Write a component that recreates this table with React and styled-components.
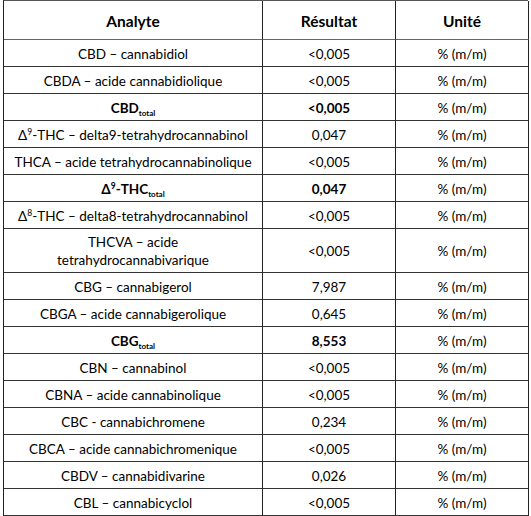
import React from "react";
import styled, { createGlobalStyle } from "styled-components";

const Global = createGlobalStyle`
  html, body { margin: 0; padding: 0; background: #fff; }
  body { font-family: Lato, "Open Sans", "Liberation Sans", sans-serif; color: #000; }
`;

const Page = styled.div`
  padding: 0 0 0 3px;
`;

const Grid = styled.div`
  display: grid;
  grid-template-columns: 259px 133px 133px;
  width: 525px;
  border-top: 1px solid #555;
  border-left: 1px solid #222;
  box-sizing: border-box;
`;

const Cell = styled.div`
  box-sizing: border-box;
  height: ${(p) => (p.$head ? 39 : p.$tall ? 44 : 27)}px;
  border-right: 1px solid #222;
  border-bottom: 1px solid ${(p) => (p.$head ? "#666" : "#333")};
  display: flex;
  align-items: center;
  justify-content: center;
  text-align: center;
  font-size: ${(p) => (p.$head ? 15.5 : 13.5)}px;
  font-weight: ${(p) => (p.$head || p.$bold ? 700 : 400)};
  line-height: 18px;
  padding: 1px 4px 0;
`;

const Label = styled.span`
  line-height: 18px;
`;

const Sub = styled.span`
  font-size: 8px;
  line-height: 1;
  vertical-align: -3px;
`;

const Sup = styled.span`
  font-size: 8.5px;
  line-height: 1;
  vertical-align: 5px;
`;

const rows = [
  { a: "CBD – cannabidiol", r: "<0,005" },
  { a: "CBDA – acide cannabidiolique", r: "<0,005" },
  { a: <>CBD<Sub>total</Sub></>, r: "<0,005", bold: true },
  { a: <>Δ<Sup>9</Sup>-THC – delta9-tetrahydrocannabinol</>, r: "0,047" },
  { a: "THCA – acide tetrahydrocannabinolique", r: "<0,005" },
  { a: <>Δ<Sup>9</Sup>-THC<Sub>total</Sub></>, r: "0,047", bold: true },
  { a: <>Δ<Sup>8</Sup>-THC – delta8-tetrahydrocannabinol</>, r: "<0,005" },
  { a: <>THCVA – acide<br />tetrahydrocannabivarique</>, r: "<0,005", tall: true },
  { a: "CBG – cannabigerol", r: "7,987" },
  { a: "CBGA – acide cannabigerolique", r: "0,645" },
  { a: <>CBG<Sub>total</Sub></>, r: "8,553", bold: true },
  { a: "CBN – cannabinol", r: "<0,005" },
  { a: "CBNA – acide cannabinolique", r: "<0,005" },
  { a: "CBC - cannabichromene", r: "0,234" },
  { a: "CBCA – acide cannabichromenique", r: "<0,005" },
  { a: "CBDV – cannabidivarine", r: "0,026" },
  { a: "CBL – cannabicyclol", r: "<0,005" },
];

export default function App() {
  return (
    <Page>
      <Global />
      <Grid>
        <Cell $head>Analyte</Cell>
        <Cell $head>Résultat</Cell>
        <Cell $head>Unité</Cell>
        {rows.map((row, i) => (
          <React.Fragment key={i}>
            <Cell $bold={row.bold} $tall={row.tall}><Label>{row.a}</Label></Cell>
            <Cell $bold={row.bold} $tall={row.tall}>{row.r}</Cell>
            <Cell $tall={row.tall}>% (m/m)</Cell>
          </React.Fragment>
        ))}
      </Grid>
    </Page>
  );
}
